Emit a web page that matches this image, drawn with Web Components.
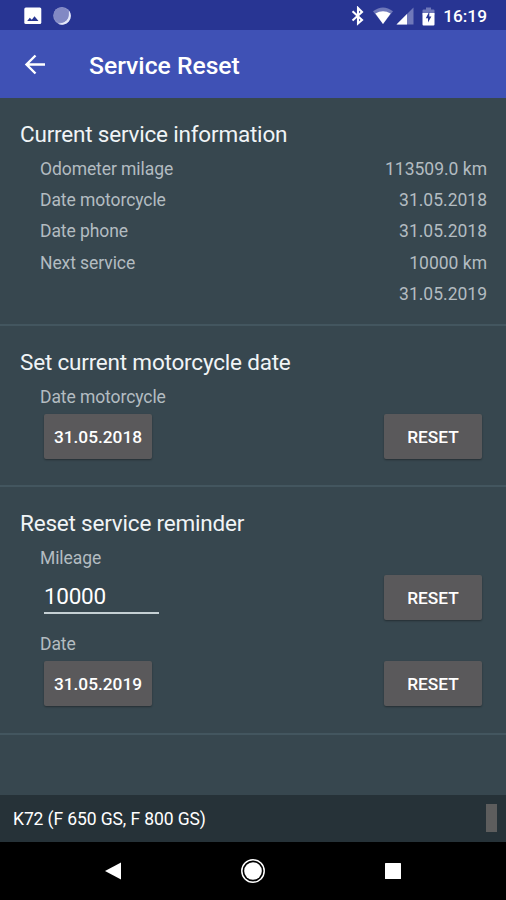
<!DOCTYPE html>
<html lang="en">
<head>
<meta charset="utf-8">
<title>Service Reset</title>
<style>
html,body{margin:0;height:100%;background:#37474f}
body{font-family:Roboto,"Liberation Sans",sans-serif;overflow:hidden}
</style>
</head>
<body>
<service-app></service-app>
<script>
const define = (name, html) => customElements.define(name, class extends HTMLElement {
  constructor() {
    super();
    const t = document.createElement('template');
    t.innerHTML = html;
    this.attachShadow({mode: 'open'}).append(t.content.cloneNode(true));
  }
});

define('status-bar', `
<style>
:host{display:flex;align-items:center;height:30px;box-sizing:border-box;padding:2px 19px 0 24px;background:#283593;color:#fff}
svg{display:block;flex:none}
.sp{flex:1}
span{font-size:17.3px;font-weight:500;line-height:28px}
</style>
<svg width="18" height="18" viewBox="0 0 18 18"><rect x=".3" y=".5" width="17" height="16.5" rx="1.5" fill="#fff"/><path d="M3.2 14l2.600-3.200 2 2 2.700-3.600 4 4.800z" fill="#283593"/></svg>
<svg width="20" height="20" viewBox="0 0 20 20" style="margin-left:10px"><circle cx="10" cy="9.7" r="8.8" fill="#8d94cb"/><path d="M17 4.500a8.800 8.800 0 0 1-11 13.200Q17.500 17 17 4.500z" fill="#e4e8fa"/><circle cx="9.2" cy="8.900" r="7.500" fill="#8289c4"/></svg>
<div class="sp"></div>
<svg width="14" height="20" viewBox="0 0 14 20" style="margin-right:1px"><path d="M1.5 5.300l9.500 8.700L7 17.500V2l4 4-9.500 8.500" fill="none" stroke="#fff" stroke-width="2.100"/></svg>
<svg width="20" height="18" viewBox="0 0 20 18" style="margin-left:7px"><path d="M0 4.3Q10-3.3 20 4.3L10 17z" fill="#6f78b9"/><path d="M2.4 6.4Q10 2.2 17.6 6.4L10 17z" fill="#fff"/></svg>
<svg width="18" height="18" viewBox="0 0 18 18" style="margin-left:3px"><path d="M.5 17.5L17.5.5v17z" fill="#6f78b9"/><path d="M.5 17.5L11 7v10.500z" fill="#fff"/></svg>
<svg width="13" height="19" viewBox="0 0 13 19" style="margin:0 8px 0 8px"><path d="M.5 3.500Q.5 2.500 1.500 2.500H4V.500h5v2h2.500q1 0 1 1V8H.500z" fill="#6f78b9"/><path d="M.5 6h12v11.500q0 1-1 1h-10q-1 0-1-1z" fill="#fff"/><path d="M7.300 4.500L3.800 11.200H6v4.300l3.400-6H7.300z" fill="#283593"/></svg>
<span>16:19</span>
`);

define('app-bar', `
<style>
:host{display:flex;align-items:center;height:68px;padding:0 24px;gap:43px;background:#3f51b5;color:#fff}
svg{display:block}
h1{margin:4px 0 0;font-size:24.700px;font-weight:500;line-height:30px;white-space:nowrap}
</style>
<svg width="22" height="22" viewBox="0 0 22 22"><path d="M21 11.500H3M11.500 2.500l-9 9 9 9" fill="none" stroke="#fff" stroke-width="2.400"/></svg>
<h1><slot></slot></h1>
`);

define('info-section', `
<style>
:host{display:block;box-sizing:border-box;padding:21px 19px 0 20px;border-bottom:2px solid #43565f}
h2{margin:0 0 5.600px;font-size:22.500px;font-weight:400;line-height:30px;letter-spacing:-.2px;color:#f0f4f6;white-space:nowrap}
</style>
<h2><slot name="title"></slot></h2><slot></slot>
`);

define('info-row', `
<style>
:host{display:flex;justify-content:space-between;height:31.400px;padding-left:20px;font-size:17.500px;line-height:28px;color:#b3bcc1;white-space:nowrap}
.k{letter-spacing:-.08px}
</style>
<span class="k"><slot></slot></span><span><slot name="value"></slot></span>
`);

define('action-row', `
<style>
:host{display:flex;justify-content:space-between;align-items:flex-start;height:45px;padding:0 5px 0 24px}
</style>
<slot></slot>
`);

define('raised-button', `
<style>
:host{display:block;box-sizing:border-box;width:var(--w,98px);height:45px;border-radius:2px;background:#5a595b;color:#fff;text-align:center;font-size:17.300px;font-weight:500;line-height:46px;box-shadow:0 1px 2px rgba(0,0,0,.35)}
</style>
<slot></slot>
`);

define('number-field', `
<style>
:host{display:block;box-sizing:border-box;width:115px;height:39px;border-bottom:2px solid #c5d0d4;font-size:22.500px;line-height:42px;letter-spacing:-.3px;color:#fff}
</style>
<slot></slot>
`);

define('vehicle-bar', `
<style>
:host{display:flex;align-items:center;justify-content:space-between;height:47px;padding:0 9px 0 13px;background:#263238;color:#fff;font-size:17.500px;letter-spacing:-.1px;white-space:nowrap}
i{display:block;width:11px;height:28px;background:#5d5d5d;margin-top:-1px}
</style>
<span><slot></slot></span><i></i>
`);

define('nav-bar', `
<style>
:host{display:grid;grid-template-columns:repeat(3,140px);justify-content:center;justify-items:center;align-items:center;height:58px;background:#000}
svg{display:block}
</style>
<svg width="16" height="18" viewBox="0 0 16 18"><path d="M0 9L16 .500v17z" fill="#fff"/></svg>
<svg width="26" height="26" viewBox="0 0 26 26"><circle cx="13" cy="13" r="11.200" fill="none" stroke="#fff" stroke-width="1.500"/><circle cx="13" cy="13" r="8.800" fill="#fff"/></svg>
<svg width="16" height="16" viewBox="0 0 16 16"><rect width="16" height="16" rx=".5" fill="#fff"/></svg>
`);

define('service-app', `
<style>
:host{display:flex;flex-direction:column;width:506px;height:900px;background:#37474f}
main{flex:1}
.a{height:228px}.b{height:161px}.c{height:248px}
.field{height:55px}
</style>
<status-bar></status-bar>
<app-bar>Service Reset</app-bar>
<main>
<info-section class="a"><span slot="title">Current service information</span>
<info-row>Odometer milage<span slot="value">113509.0 km</span></info-row>
<info-row>Date motorcycle<span slot="value">31.05.2018</span></info-row>
<info-row>Date phone<span slot="value">31.05.2018</span></info-row>
<info-row>Next service<span slot="value">10000 km</span></info-row>
<info-row><span slot="value">31.05.2019</span></info-row>
</info-section>
<info-section class="b"><span slot="title">Set current motorcycle date</span>
<info-row>Date motorcycle</info-row>
<action-row><raised-button style="--w:108px">31.05.2018</raised-button><raised-button>RESET</raised-button></action-row>
</info-section>
<info-section class="c"><span slot="title">Reset service reminder</span>
<info-row>Mileage</info-row>
<action-row class="field"><number-field>10000</number-field><raised-button>RESET</raised-button></action-row>
<info-row>Date</info-row>
<action-row><raised-button style="--w:108px">31.05.2019</raised-button><raised-button>RESET</raised-button></action-row>
</info-section>
</main>
<vehicle-bar>K72 (F 650 GS, F 800 GS)</vehicle-bar>
<nav-bar></nav-bar>
`);
</script>
</body>
</html>
